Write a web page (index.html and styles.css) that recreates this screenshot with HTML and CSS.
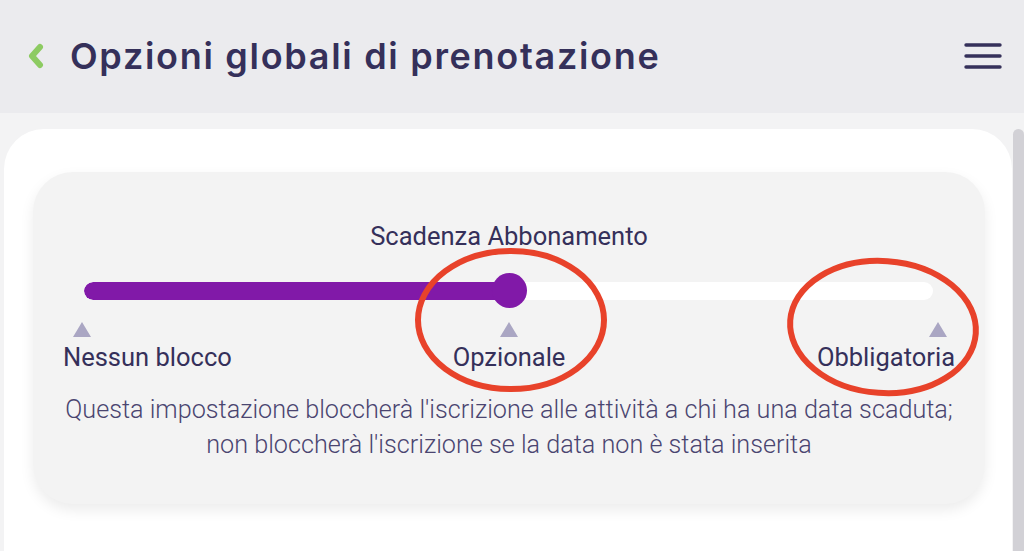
FILE: index.html
```html
<!DOCTYPE html>
<html lang="it">
<head>
<meta charset="utf-8">
<title>Opzioni globali di prenotazione</title>
<link rel="stylesheet" href="styles.css">
</head>
<body>
<header class="topbar">
  <div class="topbar-left">
    <svg class="back" width="20" height="26" viewBox="0 0 20 26"><path d="M14 4 L6 13 L14 22" fill="none" stroke="#8dcb62" stroke-width="6" stroke-linecap="round" stroke-linejoin="round"/></svg>
    <h1 class="title">Opzioni globali di prenotazione</h1>
  </div>
  <svg class="menu" width="38" height="26" viewBox="0 0 38 26"><g stroke="#35305a" stroke-width="3.4" stroke-linecap="round"><line x1="2" y1="2" x2="36" y2="2"/><line x1="2" y1="13" x2="36" y2="13"/><line x1="2" y1="24" x2="36" y2="24"/></g></svg>
</header>
<main class="content">
  <section class="sheet">
    <div class="card">
      <div class="card-title">Scadenza Abbonamento</div>
      <div class="slider">
        <div class="track"><div class="fill" style="width:50%"></div></div>
        <div class="thumb" style="left:50%"></div>
      </div>
      <div class="labels">
        <div class="opt opt-left"><span class="tri"></span><span>Nessun blocco</span></div>
        <div class="opt opt-mid"><span class="tri"></span><span>Opzionale</span></div>
        <div class="opt opt-right"><span class="tri"></span><span>Obbligatoria</span></div>
      </div>
      <p class="desc">Questa impostazione bloccherà l'iscrizione alle attività a chi ha una data scaduta;<br>non bloccherà l'iscrizione se la data non è stata inserita</p>
    </div>
  </section>
  <div class="scrollbar"></div>
</main>
<svg class="marks" width="1024" height="551" viewBox="0 0 1024 551">
  <g fill="none" stroke="#e8422a" stroke-width="6">
    <ellipse cx="511" cy="320" rx="93" ry="69"/>
    <ellipse cx="883" cy="327" rx="93" ry="66" transform="rotate(4 883 327)"/>
  </g>
</svg>
</body>
</html>
```
FILE: styles.css
```css
* { box-sizing: border-box; }
html, body { margin: 0; padding: 0; }
body {
  width: 1024px;
  height: 551px;
  overflow: hidden;
  background: #f3f3f4;
  font-family: Roboto, "Liberation Sans", sans-serif;
  color: #35305a;
  position: relative;
}
.topbar {
  height: 113px;
  background: #ebebee;
  display: flex;
  align-items: center;
  justify-content: space-between;
  padding: 0 22px 0 26px;
}
.topbar-left { display: flex; align-items: center; gap: 24px; margin-top: -2px; }
.back { display: block; }
.title {
  margin: 0;
  font-family: Inter, "Open Sans", sans-serif;
  font-weight: 600;
  font-size: 36px;
  line-height: 44px;
  color: #35305a;
  letter-spacing: 1.7px;
}
.menu { display: block; margin-top: -2px; }
.content {
  display: flex;
  align-items: flex-start;
  padding: 16px 0 0 4px;
  height: 438px;
}
.sheet {
  flex: 1;
  background: #fff;
  border-radius: 40px 40px 0 0;
  height: 430px;
  padding: 43px 27px 0 29px;
}
.scrollbar {
  width: 11px;
  margin-left: 1px;
  height: 430px;
  background: #d2d1d6;
  border-radius: 6px 6px 0 0;
}
.card {
  background: #f3f3f3;
  border-radius: 40px;
  box-shadow: 0 6px 14px rgba(0,0,0,0.08);
  padding: 49px 30px 42px 30px;
  text-align: center;
}
.card-title {
  font-size: 25.5px;
  line-height: 30px;
}
.slider {
  position: relative;
  margin: 21px 22px 0 21px;
  height: 38px;
  display: flex;
  align-items: center;
}
.track {
  width: 100%;
  height: 18px;
  border-radius: 9px;
  background: #fff;
  overflow: hidden;
}
.fill { height: 100%; background: #8119a8; border-radius: 9px; }
.thumb {
  position: absolute;
  top: 1px;
  width: 35px;
  height: 35px;
  margin-left: -17px;
  border-radius: 50%;
  background: #8119a8;
}
.labels {
  display: grid;
  grid-template-columns: 1fr auto 1fr;
  margin-top: 12px;
  font-size: 25.5px;
  line-height: 30px;
}
.opt { display: flex; flex-direction: column; gap: 5px; }
.opt-left { align-items: flex-start; }
.opt-mid { align-items: center; }
.opt-right { align-items: flex-end; }
.opt-left .tri { margin-left: 10px; }
.opt-right .tri { margin-right: 8px; }
.tri {
  width: 0;
  height: 0;
  border-left: 9px solid transparent;
  border-right: 9px solid transparent;
  border-bottom: 15px solid #aaa6c3;
}
.desc {
  margin: 20px 0 0;
  font-weight: 300;
  font-size: 25.2px;
  line-height: 35px;
  color: #4a4570;
}
.marks { position: absolute; left: 0; top: 0; pointer-events: none; }
```
